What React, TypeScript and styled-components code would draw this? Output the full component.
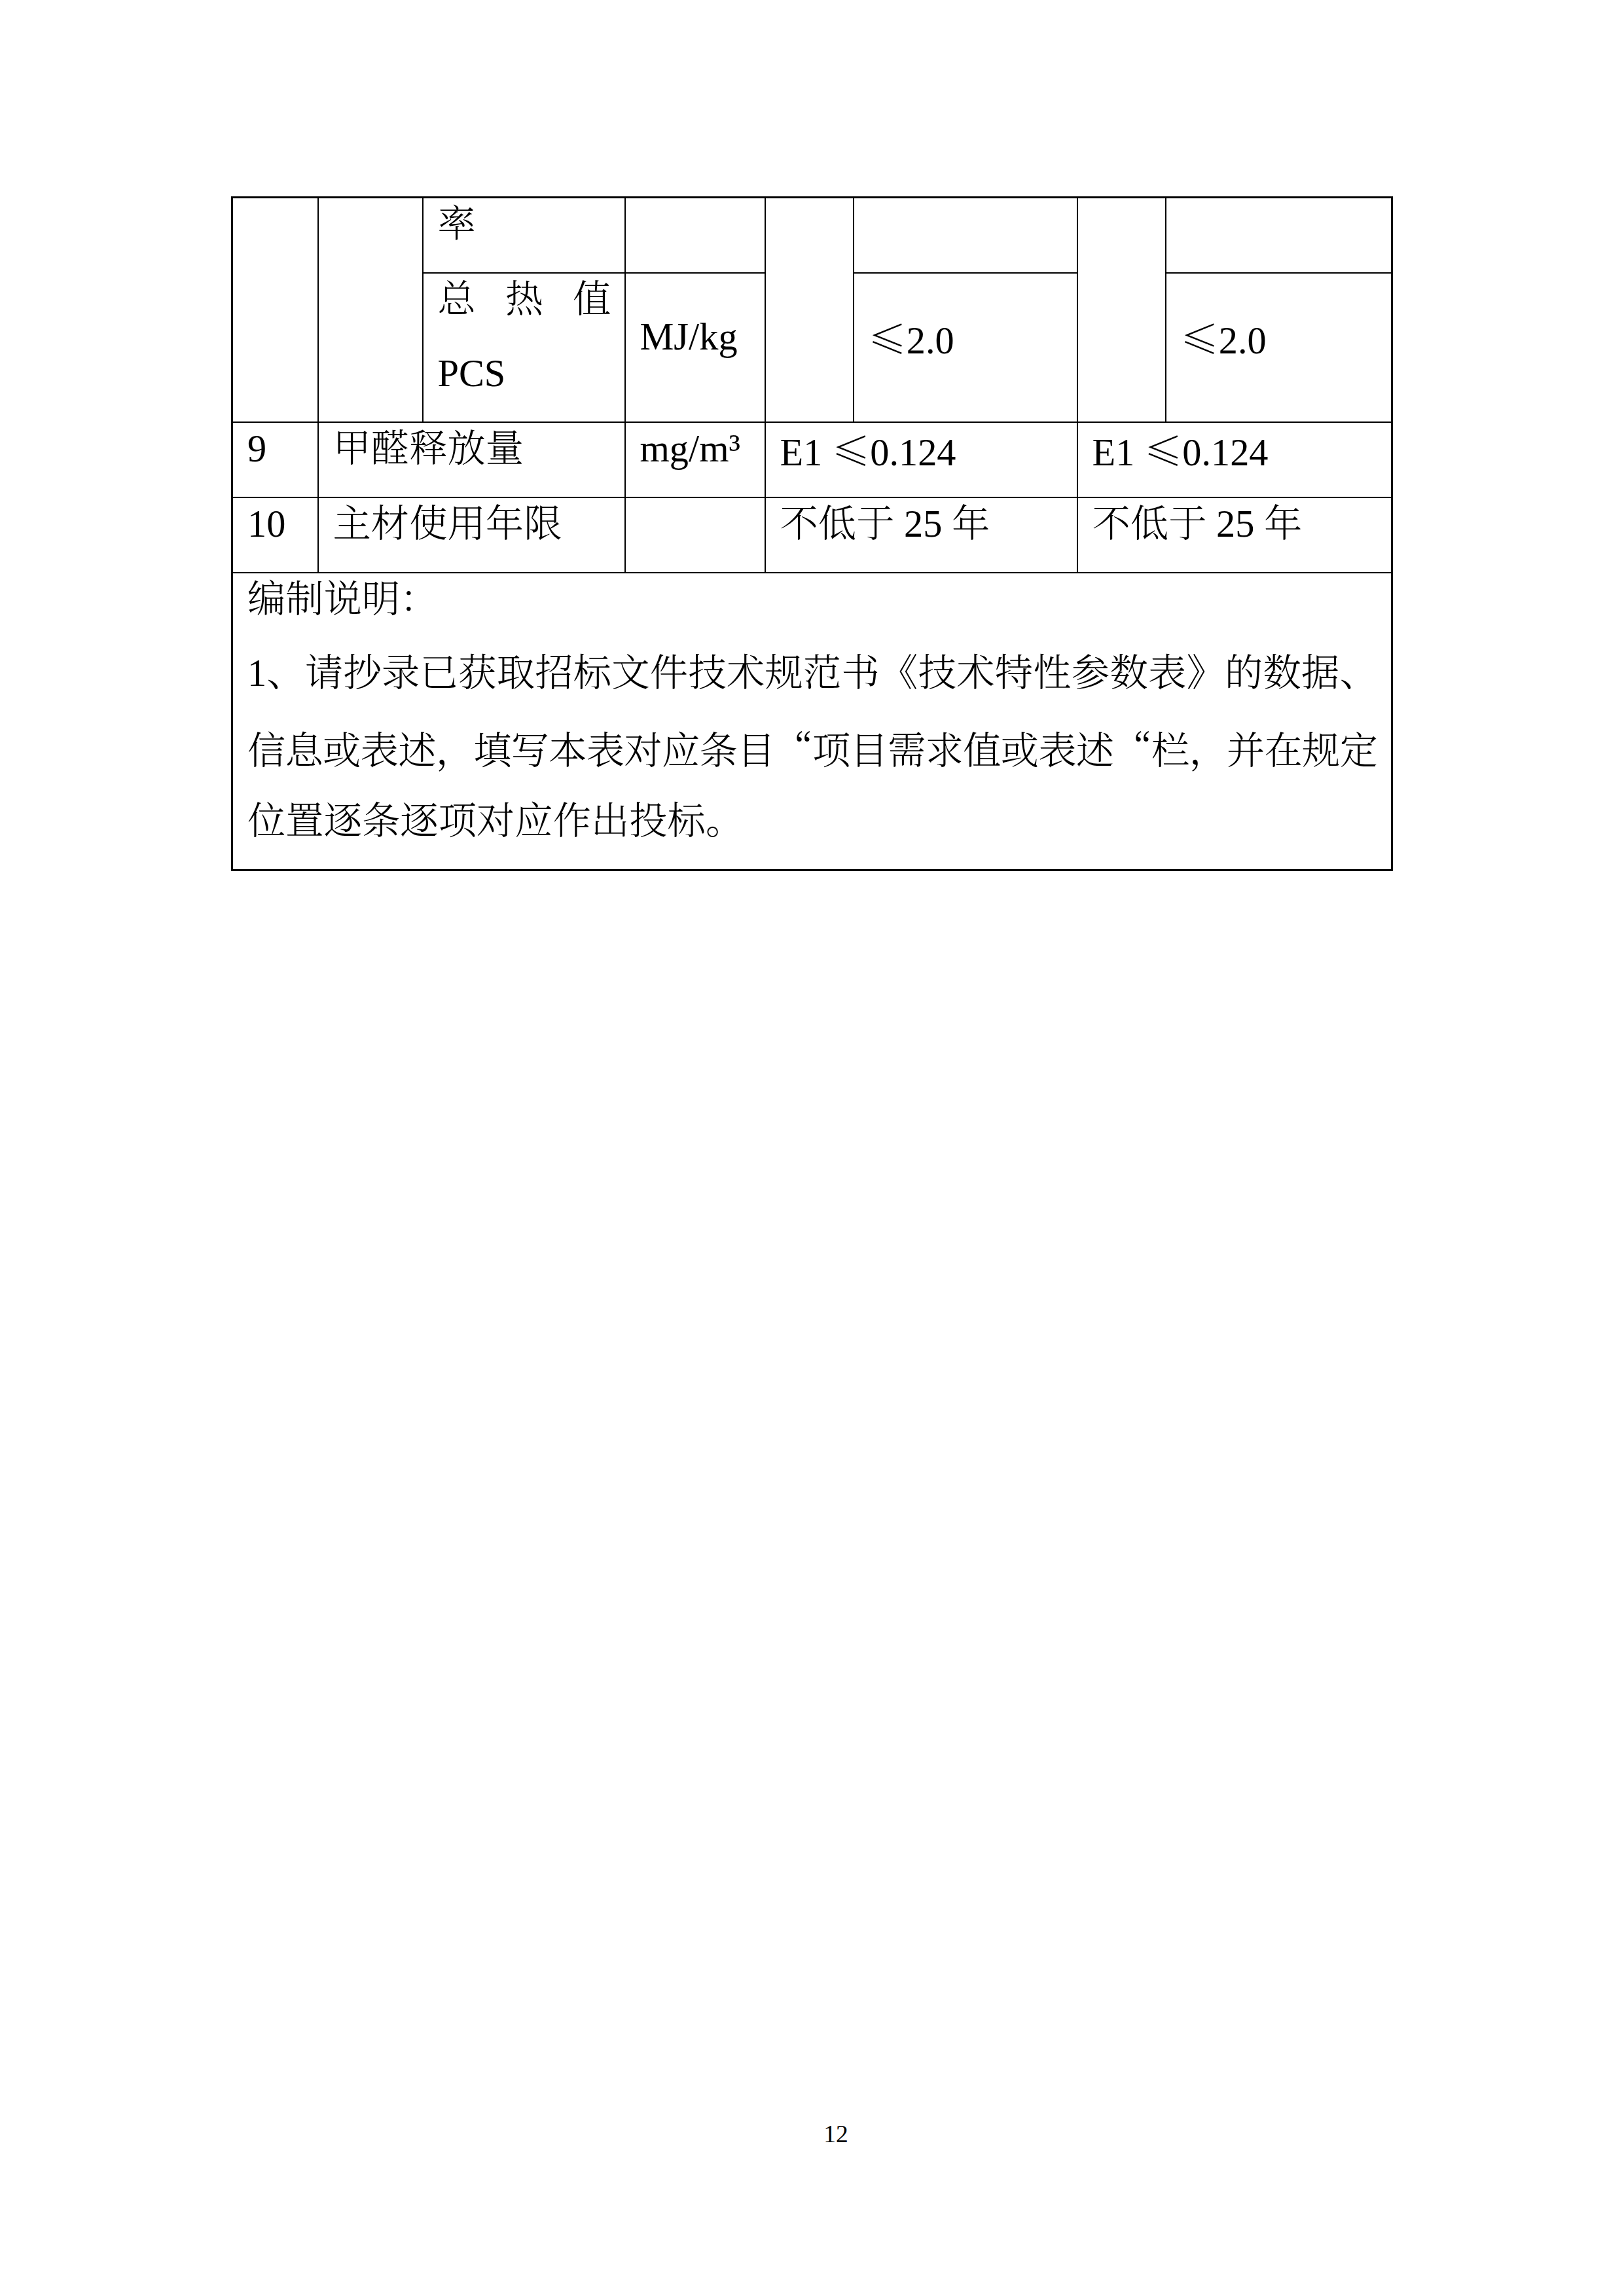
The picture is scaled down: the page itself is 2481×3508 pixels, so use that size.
import React from "react";
import styled, { createGlobalStyle, css } from "styled-components";

const CJK_STACK = `"Noto Serif CJK SC", "Source Han Serif SC", "AR PL UMing CN", "Noto Sans CJK SC", sans-serif`;

const GlobalStyle = createGlobalStyle`
  html, body {
    margin: 0;
    padding: 0;
    background: #ffffff;
  }
  body {
    font-family: "Liberation Serif", ${CJK_STACK};
    color: #000000;
  }
`;

const Page = styled.div`
  width: 2481px;
  height: 3508px;
  box-sizing: border-box;
  padding: 300px 0 0 353px;
  display: flex;
  flex-direction: column;
  background: #ffffff;
`;

const SpecTable = styled.table`
  width: 1772px;
  border-collapse: collapse;
  table-layout: fixed;
  border: 3px solid #000;
  font-size: 58.33px;
  font-weight: 300;
`;

const Row = styled.tr``;

const Cell = styled.td<{ $middle?: boolean }>`
  border: 2px solid #000;
  padding: 0 22px;
  vertical-align: ${(p) => (p.$middle ? "middle" : "top")};
  text-align: left;
`;

const Line = styled.div<{ $justify?: boolean }>`
  height: 113px;
  line-height: 80px;
  white-space: nowrap;
  ${(p) =>
    p.$justify &&
    css`
      white-space: normal;
      text-align: justify;
      text-align-last: justify;
      letter-spacing: -2px;
    `}
`;

const Cjk = styled.span`
  font-family: ${CJK_STACK};
`;

const PageNumber = styled.div`
  margin-top: auto;
  margin-bottom: 226px;
  width: 1772px;
  box-sizing: border-box;
  padding-left: 76px;
  text-align: center;
  font-family: "Liberation Serif", serif;
  font-size: 37.5px;
  line-height: 43px;
`;

const colWidths = [131, 160, 309, 214, 135, 342, 135, 346];

export default function App() {
  return (
    <>
      <GlobalStyle />
      <Page>
        <SpecTable>
          <colgroup>
            {colWidths.map((w, i) => (
              <col key={i} style={{ width: w }} />
            ))}
          </colgroup>
          <tbody>
            <Row>
              <Cell rowSpan={2} />
              <Cell rowSpan={2} />
              <Cell>
                <Line>率</Line>
              </Cell>
              <Cell />
              <Cell rowSpan={2} />
              <Cell />
              <Cell rowSpan={2} />
              <Cell />
            </Row>
            <Row>
              <Cell>
                <Line $justify>总热值</Line>
                <Line>PCS</Line>
              </Cell>
              <Cell $middle>
                <Line>MJ/kg</Line>
              </Cell>
              <Cell $middle>
                <Line>
                  <Cjk>≤</Cjk>2.0
                </Line>
              </Cell>
              <Cell $middle>
                <Line>
                  <Cjk>≤</Cjk>2.0
                </Line>
              </Cell>
            </Row>
            <Row>
              <Cell>
                <Line>9</Line>
              </Cell>
              <Cell colSpan={2}>
                <Line>甲醛释放量</Line>
              </Cell>
              <Cell>
                <Line>mg/m³</Line>
              </Cell>
              <Cell colSpan={2}>
                <Line>
                  E1 <Cjk>≤</Cjk>0.124
                </Line>
              </Cell>
              <Cell colSpan={2}>
                <Line>
                  E1 <Cjk>≤</Cjk>0.124
                </Line>
              </Cell>
            </Row>
            <Row>
              <Cell>
                <Line>10</Line>
              </Cell>
              <Cell colSpan={2}>
                <Line>主材使用年限</Line>
              </Cell>
              <Cell />
              <Cell colSpan={2}>
                <Line>不低于 25 年</Line>
              </Cell>
              <Cell colSpan={2}>
                <Line>不低于 25 年</Line>
              </Cell>
            </Row>
            <Row>
              <Cell colSpan={8}>
                <Line>编制说明：</Line>
                <Line $justify>
                  1、请抄录已获取招标文件技术规范书《技术特性参数表》的数据、
                </Line>
                <Line $justify>
                  信息或表述，填写本表对应条目<Cjk>“</Cjk>项目需求值或表述<Cjk>“</Cjk>栏，并在规定
                </Line>
                <Line>位置逐条逐项对应作出投标。</Line>
              </Cell>
            </Row>
          </tbody>
        </SpecTable>
        <PageNumber>12</PageNumber>
      </Page>
    </>
  );
}
